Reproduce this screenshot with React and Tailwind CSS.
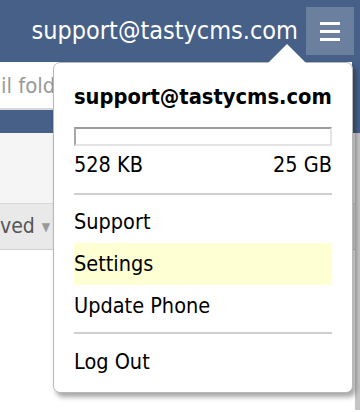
import React from 'react';

const FONT = "font-['DejaVu_Sans_Condensed','DejaVu_Sans',sans-serif]";

function MenuItem({ label, active }) {
  return (
    <div className={`h-[42px] flex items-center text-[21.5px] text-black ${active ? 'bg-[#ffffd4]' : ''}`}>
      {label}
    </div>
  );
}

export default function App() {
  return (
    <div className={`relative w-[360px] h-[412px] overflow-hidden bg-white ${FONT}`}>
      {/* Header */}
      <div className="h-[62px] bg-[#466088] flex items-center justify-end pr-[6px] gap-[8px]">
        <span className="text-white text-[25px] leading-none mb-[2px]">support@tastycms.com</span>
        <button className="w-[48px] h-[48px] bg-[#6b809e] flex flex-col items-center justify-center gap-[5px]">
          <span className="block w-[20px] h-[3px] bg-white" />
          <span className="block w-[20px] h-[3px] bg-white" />
          <span className="block w-[20px] h-[3px] bg-white" />
        </button>
      </div>

      {/* Search row */}
      <div className="flex bg-[#466088]">
        <div className="w-[352px] h-[48px] bg-white border-b-[2px] border-[#d8d8d8] flex items-center pl-[1px] text-[22px] text-[#999]">
          il folders
        </div>
      </div>
      <div className="h-[23px] bg-[#466088]" />

      {/* Content area */}
      <div className="flex">
        <div className="flex-1 flex flex-col">
          <div className="h-[71px] bg-[#f5f5f5] border-b border-[#d9d9d9]" />
          <div className="h-[46px] bg-[#e9e9e9] border-b border-[#d0d0d0] flex items-center text-[21px] text-[#555]">
            <span>ved</span>
            <span className="ml-[7px] text-[12px] text-[#999]">▼</span>
          </div>
          <div className="h-[160px] bg-white" />
        </div>
        <div className="w-[5px] bg-[#c4c4c4]" />
      </div>

      {/* Dropdown */}
      <div className="absolute left-[53px] top-[62px] w-[300px] h-[331px] bg-white border border-[#b8b8b8] rounded-[7px] shadow-[3px_4px_5px_rgba(0,0,0,0.35)] px-[20px] pt-[20px]">
        <div className="absolute left-[213px] top-[-19px] w-0 h-0 border-l-[20px] border-r-[20px] border-b-[20px] border-l-transparent border-r-transparent border-b-white" />
        <div className="h-[28px] flex items-center font-bold text-[21.7px] text-black">support@tastycms.com</div>
        <div className="mt-[16px] h-[19px] border-[2px] border-t-[#9a9a9a] border-l-[#a8a8a8] border-b-[#e4e4e4] border-r-[#e4e4e4] bg-white" />
        <div className="mt-[6px] h-[26px] flex items-center justify-between text-[21.5px] text-black">
          <span>528 KB</span>
          <span>25 GB</span>
        </div>
        <div className="mt-[15px] h-[2px] bg-[#cfcfcf]" />
        <div className="mt-[6px]">
          <MenuItem label="Support" />
          <MenuItem label="Settings" active />
          <MenuItem label="Update Phone" />
        </div>
        <div className="mt-[5px] h-[2px] bg-[#cfcfcf]" />
        <div className="mt-[7px]">
          <MenuItem label="Log Out" />
        </div>
      </div>
    </div>
  );
}
